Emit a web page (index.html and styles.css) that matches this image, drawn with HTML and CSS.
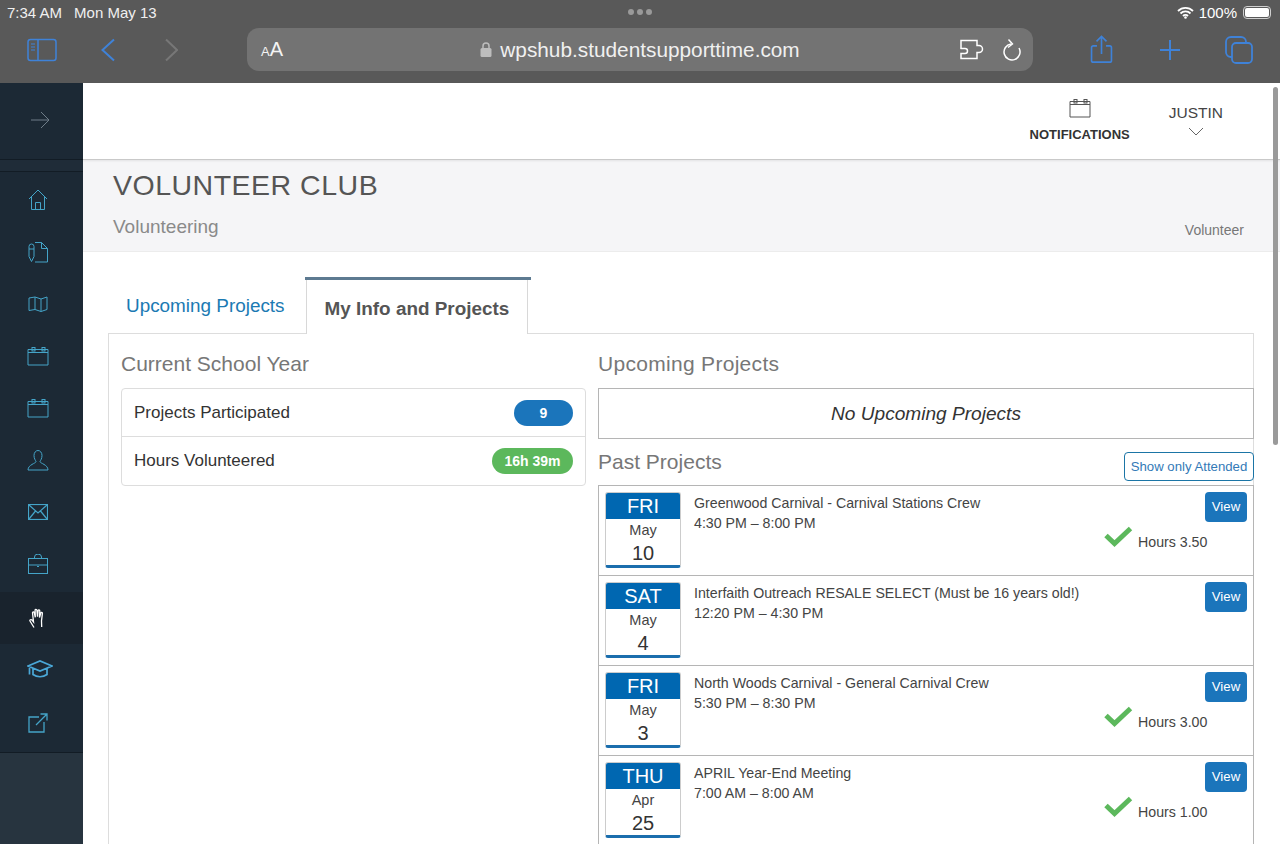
FILE: index.html
```html
<!DOCTYPE html>
<html lang="en">
<head>
  <meta charset="UTF-8">
  <title>Volunteer Club</title>
  <link rel="stylesheet" href="styles.css">
</head>
<body>
  <svg class="defs" width="0" height="0">
    <symbol id="i-cal" viewBox="0 0 22 20">
      <path d="M1 3.500h20v15.500h-20zM1 6.500h20" fill="none" stroke="currentColor"/>
      <rect x="5" y="1.500" width="3" height="3.500" fill="none" stroke="currentColor"/>
      <rect x="15" y="1.500" width="3" height="3.500" fill="none" stroke="currentColor"/>
    </symbol>
  </svg>

  <div class="browser">
    <div class="status">
      <div class="status-left"><span>7:34 AM</span><span>Mon May 13</span></div>
      <div class="dots"><i></i><i></i><i></i></div>
      <div class="status-right">
        <svg width="17" height="13" viewBox="0 0 17 13"><path d="M1 5a10.500 10.500 0 0 1 15 0M3.500 7.500a7 7 0 0 1 10 0M6 10a3.500 3.500 0 0 1 5 0" fill="none" stroke="#fff" stroke-width="1.800"/><circle cx="8.500" cy="11.500" r="1.300" fill="#fff"/></svg>
        <span>100%</span>
        <span class="battery"><b></b></span>
      </div>
    </div>
    <div class="toolbar">
      <div class="tools-left">
        <svg class="t-side" width="30" height="24" viewBox="0 0 30 24" fill="none" stroke="#3f82d8" stroke-width="1.500"><rect x="1" y="1.500" width="28" height="21" rx="2.500"/><path d="M11 1.500v21"/><path d="M4 6h4M4 9h4M4 12h4" stroke-width="1"/></svg>
        <svg class="t-back" width="14" height="24" viewBox="0 0 14 24" fill="none" stroke="#3f82d8" stroke-width="2"><path d="M13 1.500l-11.500 10.500 11.500 10.500"/></svg>
        <svg class="t-fwd" width="13" height="24" viewBox="0 0 13 24" fill="none" stroke="#777" stroke-width="2"><path d="M1 1.500l11 10.500-11 10.500"/></svg>
      </div>
      <div class="urlbar">
        <span class="aa"><small>A</small>A</span>
        <div class="url">
          <svg width="12" height="15" viewBox="0 0 12 15"><rect x="0.500" y="6" width="11" height="9" rx="1.500" fill="#bdbdbd"/><path d="M3 6.500v-2.500a3 3 0 0 1 6 0v2.500" fill="none" stroke="#bdbdbd" stroke-width="1.500"/></svg>
          <span>wpshub.studentsupporttime.com</span>
        </div>
        <div class="url-icons">
          <svg width="26" height="22" viewBox="0 0 26 22" fill="none" stroke="#fff" stroke-width="1.500"><path d="M2 2h16v5h2a3.500 3.500 0 0 1 0 7h-2v6h-16v-5h4a2.500 2.500 0 0 0 0-5h-4a1 1 0 0 1 0-1z" transform="translate(0 -0.500)"/></svg>
          <svg width="20" height="24" viewBox="0 0 20 24" fill="none" stroke="#fff" stroke-width="1.500"><path d="M9 6a8 8 0 1 0 8 4"/><path d="M6.500 1.500l4 4.500-4.500 3.500" stroke-width="1.400"/></svg>
        </div>
      </div>
      <div class="tools-right">
        <svg width="23" height="29" viewBox="0 0 24 32" fill="none" stroke="#3f82d8" stroke-width="1.800"><path d="M7 12h-4a2 2 0 0 0-2 2v14a2 2 0 0 0 2 2h18a2 2 0 0 0 2-2v-14a2 2 0 0 0-2-2h-4"/><path d="M12 21v-19M6.500 7l5.500-5.500 5.500 5.500"/></svg>
        <svg width="22" height="22" viewBox="0 0 22 22" stroke="#3f82d8" stroke-width="2"><path d="M11 1v20M1 11h20"/></svg>
        <svg class="t-tabs" width="28" height="28" viewBox="0 0 28 28" fill="none" stroke="#3f82d8" stroke-width="1.800"><rect x="7" y="7" width="20" height="20" rx="4"/><path d="M7 21h-1a5 5 0 0 1-5-5v-10a5 5 0 0 1 5-5h10a5 5 0 0 1 5 5v1"/></svg>
      </div>
    </div>
  </div>

  <div class="app">
    <nav class="sidebar">
      <div class="side-top">
        <svg width="20" height="18" viewBox="0 0 20 18" fill="none" stroke="#6f7d89"><path d="M1 9h18M11 1l8 8-8 8"/></svg>
      </div>
      <div class="side-band"></div>
      <ul class="side-list">
        <li><svg width="20" height="22" viewBox="0 0 20 22" fill="none" stroke="currentColor"><path d="M1 10l9-9 9 9M3.500 8v12.500h13v-12.500M7.500 20.500v-7h5v7"/></svg></li>
        <li><svg width="20" height="22" viewBox="0 0 20 22" fill="none" stroke="currentColor"><path d="M7 1.500h6.500l6 6v13.500h-12.500M13.500 1.500v6h6"/><path d="M1 5.500a2.500 2.500 0 0 1 5 0v10l-2.500 5-2.500-5zM1 8h5"/></svg></li>
        <li><svg width="20" height="16" viewBox="0 0 20 16" fill="none" stroke="currentColor"><path d="M1 2l6-1 6 2 6-2v12.500l-6 2-6-2-6 1zM7 1v12.500M13 3v12.500"/></svg></li>
        <li><svg width="22" height="20"><use href="#i-cal"/></svg></li>
        <li><svg width="22" height="20"><use href="#i-cal"/></svg></li>
        <li><svg width="22" height="22" viewBox="0 0 22 22" fill="none" stroke="currentColor"><path d="M7 6.500a4 5 0 0 1 8 0c0 3-1.500 5-2 6 0 2 8 3 8 8.500h-20c0-5.500 8-6.500 8-8.500-.5-1-2-3-2-6z"/></svg></li>
        <li><svg width="20" height="16" viewBox="0 0 20 16" fill="none" stroke="currentColor" stroke-width="1.200"><rect x="0.500" y="0.500" width="19" height="15"/><path d="M1 1l9 8 9-8M1 15l6.500-8M19 15l-6.500-8"/></svg></li>
        <li><svg width="20" height="20" viewBox="0 0 20 20" fill="none" stroke="currentColor"><rect x="0.500" y="4.500" width="19" height="15"/><path d="M0.500 11h19M6.500 4.500v-1.500a3 2.500 0 0 1 7 0v1.500M9 12.500h2"/></svg></li>
        <li class="active"><svg width="18" height="22" viewBox="0 0 18 22" fill="none" stroke="#fff" stroke-width="1.300"><path d="M5 20.500l-4-6.500c-.5-1 1-2 2-1l1.500 1.800-1-9c0-1.200 1.500-1.300 1.800 0l1 4.500-.2-7c0-1.300 1.700-1.300 1.800 0l.6 6.500.6-6c.1-1.300 1.700-1.200 1.700.2l-.3 6.500 1.300-4.500c.4-1.100 1.700-.8 1.600.4l-.9 7.500.2 6"/></svg></li>
        <li class="cap"><svg width="26" height="18" viewBox="0 0 26 18" fill="none" stroke="#4aa8d8" stroke-width="1.700"><path d="M1 6l12-5 12 5-12 5zM6 8.500v6c4 3 10 3 14 0v-6M2.500 6.500v8"/></svg></li>
        <li class="ext"><svg width="20" height="20" viewBox="0 0 20 20" fill="none" stroke="currentColor" stroke-width="1.300"><path d="M11 4h-10v15h15v-10M8 12l11-11M12.500 1h6.500v6.500"/></svg></li>
      </ul>
      <div class="side-foot"></div>
    </nav>

    <main class="main">
      <header class="topbar">
        <div class="notif">
          <svg class="notif-icon" width="22" height="20"><use href="#i-cal"/></svg>
          <span>NOTIFICATIONS</span>
        </div>
        <div class="user">
          <span>JUSTIN</span>
          <svg width="16" height="9" viewBox="0 0 16 9" fill="none" stroke="#666"><path d="M1 1l7 7 7-7"/></svg>
        </div>
      </header>

      <section class="page-head">
        <h1>VOLUNTEER CLUB</h1>
        <div class="page-sub">
          <span class="sub-left">Volunteering</span>
          <span class="sub-right">Volunteer</span>
        </div>
      </section>

      <section class="content">
        <div class="tabs">
          <a class="tab">Upcoming Projects</a>
          <a class="tab tab-active">My Info and Projects</a>
        </div>
        <div class="panel">
          <div class="col-left">
            <h2>Current School Year</h2>
            <ul class="stats">
              <li><span>Projects Participated</span><span class="badge badge-blue">9</span></li>
              <li><span>Hours Volunteered</span><span class="badge badge-green">16h 39m</span></li>
            </ul>
          </div>
          <div class="col-right">
            <h2 class="h2-wide">Upcoming Projects</h2>
            <div class="no-projects">No Upcoming Projects</div>
            <div class="past-head">
              <h2>Past Projects</h2>
              <button class="btn-outline">Show only Attended</button>
            </div>
            <div class="past-list">
              <article class="project">
                <div class="date"><div class="dow">FRI</div><div class="mon">May</div><div class="day">10</div></div>
                <div class="info"><div>Greenwood Carnival - Carnival Stations Crew</div><div>4:30 PM – 8:00 PM</div></div>
                <div class="side">
                  <button class="btn-view">View</button>
                  <div class="hours"><svg width="29" height="24" viewBox="0 0 29 24"><path d="M2 10.500l8.500 8 16-15" fill="none" stroke="#5cb85c" stroke-width="5"/></svg><span>Hours 3.50</span></div>
                </div>
              </article>
              <article class="project">
                <div class="date"><div class="dow">SAT</div><div class="mon">May</div><div class="day">4</div></div>
                <div class="info"><div>Interfaith Outreach RESALE SELECT (Must be 16 years old!)</div><div>12:20 PM – 4:30 PM</div></div>
                <div class="side">
                  <button class="btn-view">View</button>
                </div>
              </article>
              <article class="project">
                <div class="date"><div class="dow">FRI</div><div class="mon">May</div><div class="day">3</div></div>
                <div class="info"><div>North Woods Carnival - General Carnival Crew</div><div>5:30 PM – 8:30 PM</div></div>
                <div class="side">
                  <button class="btn-view">View</button>
                  <div class="hours"><svg width="29" height="24" viewBox="0 0 29 24"><path d="M2 10.500l8.500 8 16-15" fill="none" stroke="#5cb85c" stroke-width="5"/></svg><span>Hours 3.00</span></div>
                </div>
              </article>
              <article class="project">
                <div class="date"><div class="dow">THU</div><div class="mon">Apr</div><div class="day">25</div></div>
                <div class="info"><div>APRIL Year-End Meeting</div><div>7:00 AM – 8:00 AM</div></div>
                <div class="side">
                  <button class="btn-view">View</button>
                  <div class="hours"><svg width="29" height="24" viewBox="0 0 29 24"><path d="M2 10.500l8.500 8 16-15" fill="none" stroke="#5cb85c" stroke-width="5"/></svg><span>Hours 1.00</span></div>
                </div>
              </article>
            </div>
          </div>
        </div>
      </section>
    </main>
    <div class="scrollbar"></div>
  </div>
</body>
</html>
```
FILE: styles.css
```css
* {
  box-sizing: border-box;
}

html, body {
  margin: 0;
  padding: 0;
  height: 844px;
  overflow: hidden;
}

body {
  font-family: 'Liberation Sans', Arial, sans-serif;
  color: #333;
  background-color: #fff;
  display: flex;
  flex-direction: column;
}

.defs {
  position: absolute;
}

/* browser chrome */
.browser {
  height: 83px;
  flex: none;
  background-color: #595959;
  color: #fff;
}

.status {
  height: 24px;
  padding: 0 7px;
  display: grid;
  grid-template-columns: 1fr auto 1fr;
  align-items: center;
  font-size: 15px;
}

.status-left {
  display: flex;
  gap: 12px;
  color: #f0f0f0;
}

.dots {
  display: flex;
  gap: 3px;
}

.dots i {
  width: 6px;
  height: 6px;
  border-radius: 50%;
  background-color: #9a9a9a;
}

.status-right {
  display: flex;
  justify-content: flex-end;
  align-items: center;
  gap: 5px;
  padding-right: 2px;
}

.battery {
  width: 28px;
  height: 13px;
  margin-left: 1px;
  border: 1px solid #cfcfcf;
  border-radius: 4px;
  padding: 1px;
  display: flex;
}

.battery b {
  flex: 1;
  background-color: #fff;
  border-radius: 2px;
}

.toolbar {
  height: 59px;
  display: flex;
  align-items: flex-start;
  padding-top: 4px;
}

.tools-left {
  width: 247px;
  flex: none;
  height: 43px;
  display: flex;
  align-items: center;
  padding-left: 27px;
}

.t-back {
  margin-left: 44px;
}

.t-fwd {
  margin-left: 50px;
}

.urlbar {
  width: 786px;
  height: 43px;
  flex: none;
  background-color: #737373;
  border-radius: 12px;
  display: grid;
  grid-template-columns: 1fr auto 1fr;
  align-items: center;
  padding: 0 12px;
}

.aa {
  margin-left: 2px;
  font-size: 20px;
  color: #f4f4f4;
}

.aa small {
  font-size: 13px;
}

.url {
  display: flex;
  align-items: center;
  gap: 8px;
  font-size: 20.800px;
  color: #f0f0f0;
}

.url-icons {
  display: flex;
  justify-content: flex-end;
  align-items: center;
  gap: 17px;
  margin-right: -1px;
}

.tools-right {
  flex: 1;
  height: 43px;
  display: flex;
  align-items: center;
  padding-left: 57px;
  gap: 46px;
}

.t-tabs {
  margin-left: -2px;
}

/* app */
.app {
  flex: 1;
  display: flex;
  min-height: 0;
  position: relative;
}

.sidebar {
  width: 83px;
  flex: none;
  background-color: #1c2935;
  display: flex;
  flex-direction: column;
}

.side-top {
  height: 76px;
  display: flex;
  align-items: center;
  justify-content: center;
  padding: 0 4px 2px 0;
}

.side-band {
  height: 13px;
  background-color: #1f2c38;
  border-top: 1px solid #121c25;
  border-bottom: 1px solid #121c25;
}

.side-list {
  list-style: none;
  margin: 0;
  padding: 2px 0 0;
  border-bottom: 1px solid #121c25;
}

.side-list li {
  height: 52px;
  display: flex;
  align-items: center;
  justify-content: center;
  color: #44a4c8;
  padding-right: 7px;
}

.side-list li.active {
  background-color: #19232d;
  margin-top: 2px;
}

.side-list li.cap {
  height: 50px;
  padding-right: 3px;
}

.side-list li.ext {
  height: 58px;
}

.side-foot {
  flex: 1;
  background-color: #27343f;
}

.main {
  flex: 1;
  min-width: 0;
  display: flex;
  flex-direction: column;
}

.topbar {
  height: 77px;
  flex: none;
  background-color: #fff;
  border-bottom: 1px solid #c9c9c9;
  box-shadow: 0 1px 2px rgba(0, 0, 0, 0.08);
  display: flex;
  justify-content: flex-end;
  padding-right: 57px;
  position: relative;
}

.notif {
  display: flex;
  flex-direction: column;
  align-items: center;
  padding-top: 15px;
  font-size: 13px;
  font-weight: bold;
  color: #333;
}

.notif-icon {
  color: #555;
  margin-bottom: 9px;
}

.user {
  margin-left: 39px;
  display: flex;
  flex-direction: column;
  align-items: center;
  padding-top: 21px;
  font-size: 15.500px;
  color: #444;
  gap: 5px;
}

.page-head {
  height: 92px;
  flex: none;
  background-color: #f5f5f7;
  border-bottom: 1px solid #ececec;
  padding: 8px 36px 0 30px;
}

.page-head h1 {
  margin: 0;
  font-size: 28.500px;
  font-weight: normal;
  letter-spacing: 0.500px;
  line-height: 34px;
  color: #555;
}

.page-sub {
  display: flex;
  justify-content: space-between;
  align-items: flex-end;
  margin-top: 14px;
}

.sub-left {
  font-size: 19px;
  color: #8a8a8a;
}

.sub-right {
  font-size: 14px;
  color: #777;
}

.content {
  flex: 1;
  min-height: 0;
  overflow: hidden;
  padding: 25px 26px 0 25px;
}

.tabs {
  display: flex;
  height: 57px;
  align-items: flex-end;
  margin-bottom: -1px;
  position: relative;
}

.tab {
  display: block;
  font-size: 18.900px;
  color: #1b7ab3;
  padding: 0 18px;
  height: 57px;
  line-height: 58px;
}

.tab-active {
  position: relative;
  margin-left: 3px;
  color: #555;
  font-weight: bold;
  background-color: #fff;
  border-right: 1px solid #d8d8d8;
  border-left: 1px solid #d8d8d8;
  line-height: 64px;
}

.tab-active::before {
  content: "";
  position: absolute;
  top: 0;
  left: -2px;
  right: -4px;
  height: 3px;
  background-color: #5d7a91;
}

.panel {
  border: 1px solid #ddd;
  display: flex;
  padding-left: 12px;
  height: 530px;
}

.col-left {
  width: 465px;
  flex: none;
}

.col-right {
  width: 656px;
  margin-left: 12px;
  flex: none;
}

h2 {
  margin: 0;
  font-size: 21px;
  font-weight: normal;
  color: #777;
  line-height: 26px;
  padding-top: 17px;
}

.h2-wide {
  letter-spacing: 0.300px;
}

.stats {
  list-style: none;
  margin: 11px 0 0;
  padding: 0;
  border: 1px solid #ddd;
  border-radius: 4px;
}

.stats li {
  height: 49px;
  display: flex;
  justify-content: space-between;
  align-items: center;
  padding: 0 12px;
  font-size: 17px;
}

.stats li:first-child {
  height: 47px;
}

.stats li + li {
  border-top: 1px solid #ddd;
}

.badge {
  height: 26px;
  line-height: 26px;
  border-radius: 13px;
  font-size: 14px;
  font-weight: bold;
  color: #fff;
  text-align: center;
}

.badge-blue {
  width: 59px;
  background-color: #1b75bb;
}

.badge-green {
  width: 81px;
  background-color: #5cb85c;
}

.no-projects {
  margin-top: 11px;
  height: 51px;
  border: 1px solid #b5b5b5;
  display: flex;
  align-items: center;
  justify-content: center;
  font-size: 19.100px;
  font-style: italic;
}

.past-head {
  display: flex;
  justify-content: space-between;
  align-items: flex-end;
  height: 46px;
}

.past-head h2 {
  padding: 0 0 10px;
}

.btn-outline {
  height: 29px;
  width: 130px;
  padding: 0;
  background-color: #fff;
  border: 1px solid #1b75a6;
  border-radius: 4px;
  color: #337ab7;
  font-family: inherit;
  font-size: 13.200px;
  margin-bottom: 4px;
}

.past-list {
  border: 1px solid #b5b5b5;
  border-bottom: none;
}

.project {
  height: 90px;
  display: flex;
  padding: 6px 6px 0;
  border-bottom: 1px solid #b5b5b5;
  font-size: 14.200px;
}

.date {
  width: 76px;
  height: 76px;
  flex: none;
  border: 1px solid #ccc;
  border-bottom: 3px solid #1b6ead;
  border-radius: 3px;
  text-align: center;
  overflow: hidden;
}

.dow {
  background-color: #0067b1;
  color: #fff;
  font-size: 20px;
  height: 27px;
  line-height: 29px;
  margin: -1px -1px 0;
}

.mon {
  font-size: 14.500px;
  line-height: 16px;
  margin-top: 3px;
  color: #444;
}

.day {
  font-size: 20px;
  line-height: 24px;
  margin-top: 3px;
}

.info {
  margin-left: 13px;
  flex: 1;
  line-height: 20px;
  padding-top: 0.500px;
  color: #444;
}

.side {
  width: 143px;
  flex: none;
  display: flex;
  flex-direction: column;
  align-items: flex-end;
}

.btn-view {
  width: 42px;
  height: 30px;
  padding: 0 0 2px;
  border: none;
  border-radius: 4px;
  background-color: #1b75bb;
  color: #fff;
  font-family: inherit;
  font-size: 13.200px;
}

.hours {
  width: 143px;
  display: flex;
  align-items: flex-start;
  gap: 5px;
  margin-top: 3px;
}

.hours span {
  margin-top: 9px;
  color: #444;
}

.scrollbar {
  position: absolute;
  top: 4px;
  right: 2px;
  width: 5px;
  height: 358px;
  border-radius: 3px;
  background-color: #9a9a9a;
}
```
